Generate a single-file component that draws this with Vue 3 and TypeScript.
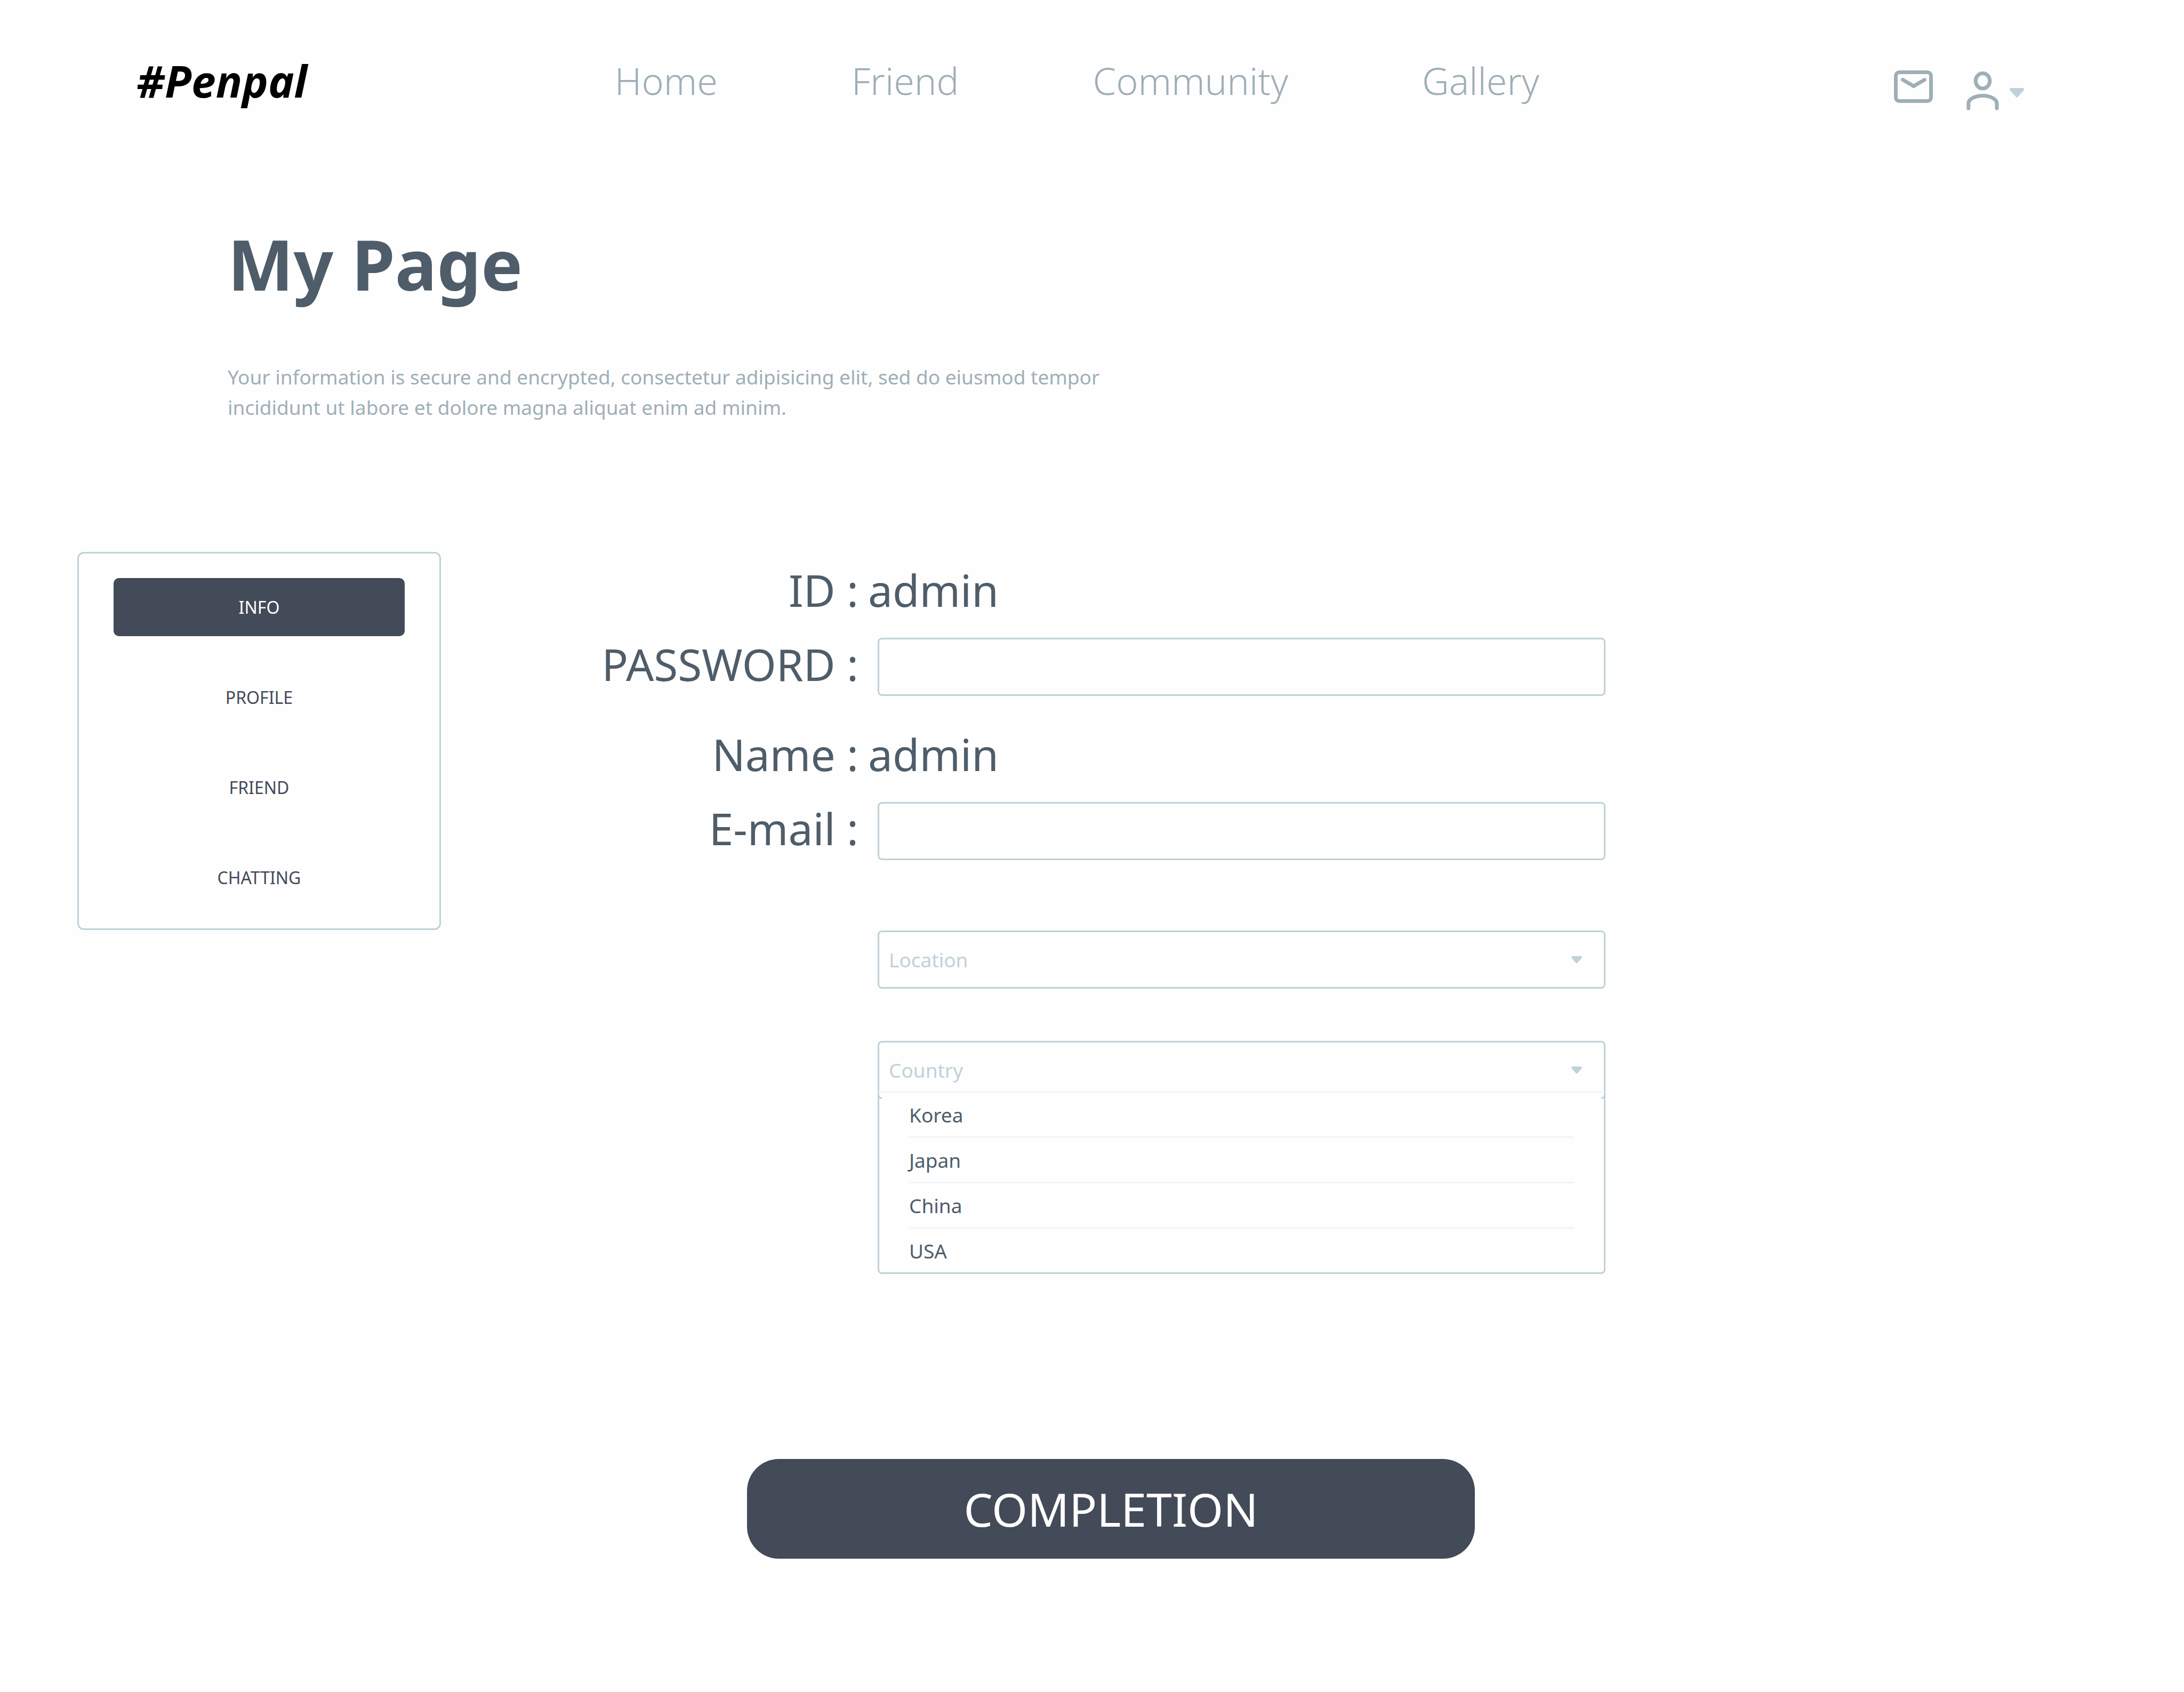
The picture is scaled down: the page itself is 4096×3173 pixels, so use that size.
<script setup lang="ts">
import { ref } from 'vue'

interface NavLink {
  label: string
  href: string
}

const navLinks: NavLink[] = [
  { label: 'Home', href: '#home' },
  { label: 'Friend', href: '#friend' },
  { label: 'Community', href: '#community' },
  { label: 'Gallery', href: '#gallery' },
]

const tabs: string[] = ['INFO', 'PROFILE', 'FRIEND', 'CHATTING']
const activeTab = ref<string>('INFO')

const countries: string[] = ['Korea', 'Japan', 'China', 'USA']
const country = ref<string>('')
const password = ref<string>('')
const email = ref<string>('')
</script>

<template>
  <div class="page">
    <header class="header">
      <a class="logo" href="#home">#Penpal</a>
      <nav class="nav">
        <a v-for="link in navLinks" :key="link.label" :href="link.href">{{ link.label }}</a>
      </nav>
      <div class="actions">
        <button type="button" class="icon-button" aria-label="Messages">
          <svg width="74" height="92" viewBox="0 0 74 92" fill="none" stroke="#9fafb7" stroke-width="7">
            <rect x="3.5" y="18.5" width="66" height="54" rx="7" />
            <path d="M16.5 32.5L37 44.5L57.5 32.5" stroke-linecap="round" />
          </svg>
        </button>
        <button type="button" class="icon-button profile" aria-label="Account">
          <svg width="61" height="92" viewBox="0 0 61 92" fill="none" stroke="#9fafb7" stroke-width="7">
            <ellipse cx="30.5" cy="34.7" rx="13.3" ry="14.2" />
            <path d="M3.8 86V77C3.8 69 15.5 62.4 30.4 62.4S57 69 57 77V86" stroke-linecap="round" />
          </svg>
          <svg width="27" height="92" viewBox="0 0 27 92" fill="#c1d1d8">
            <path d="M3 48H24C27 48 27.5 51 26 53L15 65Q13.5 66.5 12 65L1 53C-0.5 51 0 48 3 48Z" />
          </svg>
        </button>
      </div>
    </header>

    <main>
      <section class="intro">
        <h1>My Page</h1>
        <p>
          Your information is secure and encrypted, consectetur adipisicing elit, sed do eiusmod tempor<br />
          incididunt ut labore et dolore magna aliquat enim ad minim.
        </p>
      </section>

      <form @submit.prevent>
        <div class="content">
          <div class="tabs">
            <button
              v-for="tab in tabs"
              :key="tab"
              type="button"
              :class="['tab', { active: tab === activeTab }]"
              @click="activeTab = tab"
            >
              {{ tab }}
            </button>
          </div>

          <div class="fields">
            <div class="group">
              <div class="row">
                <span class="label">ID :</span>
                <span class="value">admin</span>
              </div>
              <div class="row">
                <label class="label" for="password">PASSWORD :</label>
                <input id="password" v-model="password" class="control" type="password" />
              </div>
            </div>
            <div class="group">
              <div class="row">
                <span class="label">Name :</span>
                <span class="value">admin</span>
              </div>
              <div class="row">
                <label class="label" for="email">E-mail :</label>
                <input id="email" v-model="email" class="control" type="email" />
              </div>
            </div>
            <div class="selects">
              <div class="control picker">
                <select aria-label="Location">
                  <option value="">Location</option>
                </select>
                <svg class="caret" width="20" height="14" viewBox="0 0 20 14" fill="#c1d1d8">
                  <path d="M2 0H18C20 0 20.5 2.5 19 4L11.5 12.5Q10 14 8.5 12.5L1 4C-0.5 2.5 0 0 2 0Z" />
                </svg>
              </div>
              <div class="control picker">
                <select v-model="country" aria-label="Country">
                  <option value="">Country</option>
                  <option v-for="name in countries" :key="name" :value="name">{{ name }}</option>
                </select>
                <svg class="caret" width="20" height="14" viewBox="0 0 20 14" fill="#c1d1d8">
                  <path d="M2 0H18C20 0 20.5 2.5 19 4L11.5 12.5Q10 14 8.5 12.5L1 4C-0.5 2.5 0 0 2 0Z" />
                </svg>
                <div class="menu">
                  <ul>
                    <li v-for="name in countries" :key="name">
                      <button type="button" @click="country = name">{{ name }}</button>
                    </li>
                  </ul>
                </div>
              </div>
            </div>
          </div>
        </div>

        <button type="submit" class="submit">COMPLETION</button>
      </form>
    </main>
  </div>
</template>

<style>
body {
  background: #fefefe;
}
</style>

<style scoped>
.page {
  box-sizing: border-box;
  padding-bottom: 250px;
  background: #fefefe;
  color: #4e5d69;
  font-family: 'Noto Sans', 'Open Sans', sans-serif;
}

.page * {
  box-sizing: border-box;
}

button,
input,
select {
  margin: 0;
  border: 0;
  padding: 0;
  background: none;
  color: inherit;
  font: inherit;
}

.header {
  display: grid;
  grid-template-columns: 897fr 2400fr auto;
  align-items: center;
  height: 302px;
  padding: 0 300px 0 256px;
}

.logo {
  color: #000;
  font-size: 82px;
  font-style: italic;
  font-weight: 700;
  text-decoration: none;
}

.nav {
  display: flex;
  gap: 251px;
  font-size: 70px;
  font-weight: 300;
}

.nav a {
  color: #9fafb7;
  text-decoration: none;
}

.actions {
  display: flex;
  gap: 62px;
  padding-top: 24px;
}

.icon-button {
  display: flex;
}

.profile {
  gap: 20px;
}

.icon-button svg {
  display: block;
}

.intro {
  padding: 112px 427px 0;
}

h1 {
  margin: 0;
  font-size: 131px;
  font-weight: 700;
  line-height: 160px;
}

.intro p {
  margin: 104px 0 0;
  color: #9fafb7;
  font-size: 37px;
  line-height: 57px;
}

.content {
  display: grid;
  grid-template-columns: 682fr 2184fr 1085fr;
  align-items: start;
  margin-top: 243px;
  padding-left: 145px;
}

.tabs {
  display: flex;
  flex-direction: column;
  gap: 60px;
  border: 3px solid #c1d1d8;
  border-radius: 12px;
  padding: 46px 65px 41px;
}

.tab {
  height: 109px;
  border-radius: 10px;
  color: #434a58;
  font-size: 32px;
}

.tab.active {
  background: #434a58;
  color: #fff;
}

.fields {
  display: flex;
  flex-direction: column;
  gap: 60px;
  padding-top: 22px;
}

.group {
  display: flex;
  flex-direction: column;
  gap: 30px;
}

.row {
  display: grid;
  grid-template-columns: 783fr 1401fr;
  align-items: center;
  height: 109px;
  font-size: 82px;
  line-height: 82px;
}

.label {
  padding-bottom: 12px;
  text-align: right;
}

.value {
  padding: 0 0 12px 18px;
}

.control {
  height: 109px;
  margin-left: 36px;
  border: 3px solid #c1d1d8;
  border-radius: 8px;
}

input.control {
  padding: 0 20px;
  font-size: 37px;
}

.selects {
  display: flex;
  flex-direction: column;
  gap: 98px;
  margin-top: 72px;
  padding-left: 783px;
}

.picker {
  position: relative;
}

.picker select {
  width: 100%;
  height: 100%;
  padding: 0 18px;
  color: #c1d1d8;
  font-size: 37px;
  appearance: none;
}

.caret {
  position: absolute;
  top: 45px;
  right: 41px;
  pointer-events: none;
}

/* The list lies over the lower edge of the box, whose corners stay in sight. */
.menu {
  position: absolute;
  top: 91px;
  right: -3px;
  left: -3px;
  border: 3px solid #c1d1d8;
  border-top-color: #f1f5f9;
  border-radius: 0 0 8px 8px;
}

.menu ul {
  margin: 0 5px;
  padding: 0 51px;
  background: #fefefe;
  list-style: none;
}

.menu li + li {
  border-top: 3px solid #f1f5f9;
}

.menu button {
  display: block;
  width: 100%;
  height: 82px;
  font-size: 37px;
  text-align: left;
}

.submit {
  display: block;
  width: 33.333%;
  height: 187px;
  margin: 675px 0 0 34.2%;
  border-radius: 60px;
  background: #434a58;
  color: #fff;
  font-size: 86px;
}
</style>
